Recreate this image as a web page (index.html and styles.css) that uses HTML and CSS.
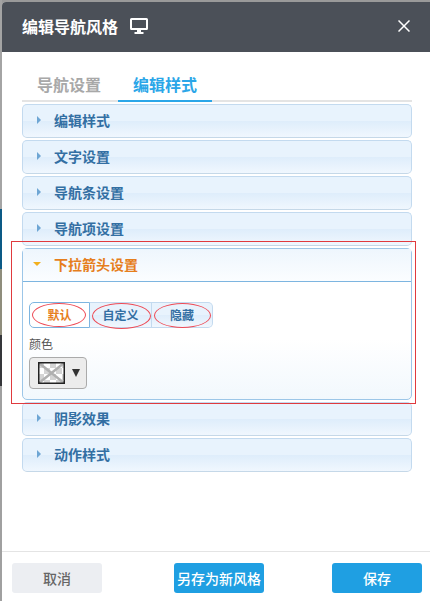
FILE: index.html
```html
<!DOCTYPE html>
<html lang="zh">
<head>
<meta charset="utf-8">
<title>编辑导航风格</title>
<link rel="stylesheet" href="styles.css">
</head>
<body>
<div class="page">
  <div class="strip"></div>
  <div class="modal">
    <header class="head">
      <h1 class="title">编辑导航风格</h1>
      <svg class="monitor" width="18" height="16" viewBox="0 0 18 16"><path fill="#fff" fill-rule="evenodd" d="M1.5 0h15A1.5 1.5 0 0 1 18 1.5v9a1.5 1.5 0 0 1-1.5 1.5H11v2h2.5v2h-9v-2H7v-2H1.500A1.500 1.500 0 0 1 0 10.500v-9A1.500 1.500 0 0 1 1.500 0zM2 2v8h14V2z"/></svg>
      <svg class="close" width="12" height="12" viewBox="0 0 12 12"><path stroke="#fff" stroke-width="1.500" d="M.5.500l11 11M11.500.500l-11 11"/></svg>
    </header>
    <main class="content">
      <nav class="tabs">
        <span class="tab">导航设置</span>
        <span class="tab tab-on">编辑样式</span>
      </nav>
      <section class="panel"><i class="tri"></i><span>编辑样式</span></section>
      <section class="panel"><i class="tri"></i><span>文字设置</span></section>
      <section class="panel"><i class="tri"></i><span>导航条设置</span></section>
      <section class="panel"><i class="tri"></i><span>导航项设置</span></section>
      <section class="open">
        <div class="open-head"><i class="tri-down"></i><span>下拉箭头设置</span></div>
        <div class="open-body">
          <div class="seg">
            <span class="seg-item seg-first">默认</span>
            <span class="seg-item seg-mid">自定义</span>
            <span class="seg-item seg-last">隐藏</span>
          </div>
          <div class="label">颜色</div>
          <div class="picker">
            <svg class="swatch" width="27" height="22" viewBox="0 0 27 22">
              <path fill="#fff" d="M0 0h27v22H0z"/>
              <path fill="#d4d4d4" d="M0 0h6v6H0zM12 0h6v6h-6zM24 0h3v6h-3zM6 6h6v6H6zM18 6h6v6h-6zM0 12h6v6H0zM12 12h6v6h-6zM24 12h3v6h-3zM6 18h6v4H6zM18 18h6v4h-6z"/>
              <path stroke="#b0b0b0" stroke-width="2.500" fill="none" d="M1 1l25 20M26 1L1 21"/>
              <path stroke="#222" stroke-width="1.500" fill="none" d="M.75.750h25.500v20.500H.75z"/>
            </svg>
            <i class="caret"></i>
          </div>
        </div>
      </section>
      <section class="panel"><i class="tri"></i><span>阴影效果</span></section>
      <section class="panel"><i class="tri"></i><span>动作样式</span></section>
      <div class="redbox"></div>
      <i class="oval oval-a"></i>
      <i class="oval oval-b"></i>
      <i class="oval oval-c"></i>
    </main>
    <footer class="foot">
      <button class="btn btn-grey">取消</button>
      <button class="btn btn-blue btn-mid">另存为新风格</button>
      <button class="btn btn-blue btn-end">保存</button>
    </footer>
  </div>
</div>
</body>
</html>
```
FILE: styles.css
```css
* { box-sizing: border-box; }
html, body { margin: 0; padding: 0; }
body {
  width: 430px;
  height: 601px;
  overflow: hidden;
  background: #9a9a9a;
  font-family: "Noto Sans CJK SC", "Liberation Sans", sans-serif;
}
.page { display: flex; height: 601px; padding-top: 2px; }
.strip {
  width: 2px;
  margin-top: -2px;
  flex: none;
  background: linear-gradient(to bottom,
    #a4a4a4 0, #a4a4a4 209px,
    #0c5a86 209px, #0c5a86 269px,
    #8f8d7c 269px, #8f8d7c 335px,
    #35363a 335px, #35363a 386px,
    #a0a0a0 386px, #a0a0a0 601px);
}
.modal {
  position: relative;
  flex: 1;
  display: flex;
  flex-direction: column;
  background: #fff;
  border-top-left-radius: 4px;
  overflow: hidden;
}
.head {
  height: 50px;
  flex: none;
  display: flex;
  align-items: center;
  padding: 0 20px 2px;
  background: #4b5058;
}
.title {
  margin: 0;
  font-size: 16px;
  font-weight: 700;
  line-height: 22px;
  color: #fff;
}
.monitor { margin-left: 12px; }
.close { margin-left: auto; }
.content {
  position: relative;
  flex: 1;
  padding: 21px 18px 0 20px;
}
.tabs {
  display: flex;
  height: 29px;
  margin-bottom: 2px;
  border-bottom: 2px solid #e4e4e4;
}
.tab {
  width: 96px;
  height: 29px;
  padding-right: 2px;
  text-align: center;
  font-size: 16px;
  font-weight: 700;
  line-height: 22px;
  color: #a8a8a8;
}
.tab-on {
  width: 94px;
  padding-right: 0;
  color: #2ba6e8;
  border-bottom: 2px solid #2ba6e8;
}
.panel {
  display: flex;
  align-items: center;
  width: 390px;
  height: 34px;
  margin-bottom: 2px;
  padding: 0 0 2px 14px;
  border: 1px solid #c3daef;
  border-bottom-color: #c5d8e8;
  border-radius: 5px;
  background: linear-gradient(to bottom, #e8f3fd 0, #e8f3fd 50%, #deedfb 50%, #f0f7fe 100%);
  font-size: 14px;
  font-weight: 700;
  color: #336fa3;
}
.tri {
  width: 0;
  height: 0;
  margin-right: 13px;
  border-left: 4px solid #6ea6d4;
  border-top: 4px solid transparent;
  border-bottom: 4px solid transparent;
}
.open {
  width: 390px;
  height: 152px;
  margin-bottom: 2px;
  border: 1px solid #9cc6e8;
  border-radius: 5px;
  background: linear-gradient(to bottom, #fff 0, #fff 60%, #f2f8fd 100%);
}
.open-head {
  display: flex;
  align-items: center;
  height: 33px;
  padding: 0 0 2px 10px;
  border-bottom: 1px solid #7db5e0;
  background: linear-gradient(to bottom, #eef6fd, #fbfdff);
  font-size: 14px;
  font-weight: 700;
  color: #e67e1c;
}
.tri-down {
  width: 0;
  height: 0;
  margin-right: 13px;
  border-top: 4px solid #f2b01e;
  border-left: 4px solid transparent;
  border-right: 4px solid transparent;
}
.open-body { padding: 20px 0 0 6px; }
.seg {
  display: flex;
  width: 184px;
  height: 26px;
  font-size: 12px;
  font-weight: 700;
  line-height: 24px;
  text-align: center;
  color: #336fa3;
}
.seg-item {
  border: 1px solid #c3daef;
  border-left: 0;
  background: linear-gradient(to bottom, #e8f3fd 50%, #deedfb 50%, #f0f7fe);
}
.seg-first {
  width: 61px;
  border: 1px solid #7db5e0;
  border-radius: 5px 0 0 5px;
  background: #fff;
  color: #e67e1c;
}
.seg-mid { width: 62px; }
.seg-last { width: 61px; border-radius: 0 5px 5px 0; }
.label {
  margin-top: 7px;
  height: 22px;
  font-size: 12px;
  line-height: 18px;
  color: #555;
}
.picker {
  display: flex;
  align-items: center;
  width: 58px;
  height: 32px;
  padding-left: 8px;
  border: 1px solid #aaa;
  border-radius: 4px;
  background: #ececec;
}
.swatch { flex: none; }
.caret {
  margin: -1px 0 0 7px;
  width: 0;
  height: 0;
  border-top: 8px solid #333;
  border-left: 4px solid transparent;
  border-right: 4px solid transparent;
}
.redbox {
  position: absolute;
  left: 9px;
  top: 189px;
  width: 405px;
  height: 163px;
  border: 1px solid #e03a3e;
  pointer-events: none;
}
.oval {
  position: absolute;
  top: 251px;
  height: 24px;
  border: 1px solid #ee4a55;
  border-radius: 50%;
}
.oval-a { left: 30px; width: 54px; }
.oval-b { left: 90px; width: 59px; height: 26px; }
.oval-c { left: 152px; width: 57px; height: 25px; }
.foot {
  flex: none;
  height: 50px;
  display: flex;
  align-items: flex-start;
  padding: 11px 8px 0 10px;
  border-top: 1px solid #e4e4e4;
}
.btn {
  width: 90px;
  height: 30px;
  padding: 0;
  border: 0;
  border-radius: 3px;
  font-family: inherit;
  font-size: 14px;
  font-weight: 500;
  line-height: 30px;
}
.btn-grey { background: #eceef2; color: #666; }
.btn-blue { background: #1f9fe2; color: #fff; }
.btn-mid { margin-left: 72px; }
.btn-end { margin-left: auto; }
```
